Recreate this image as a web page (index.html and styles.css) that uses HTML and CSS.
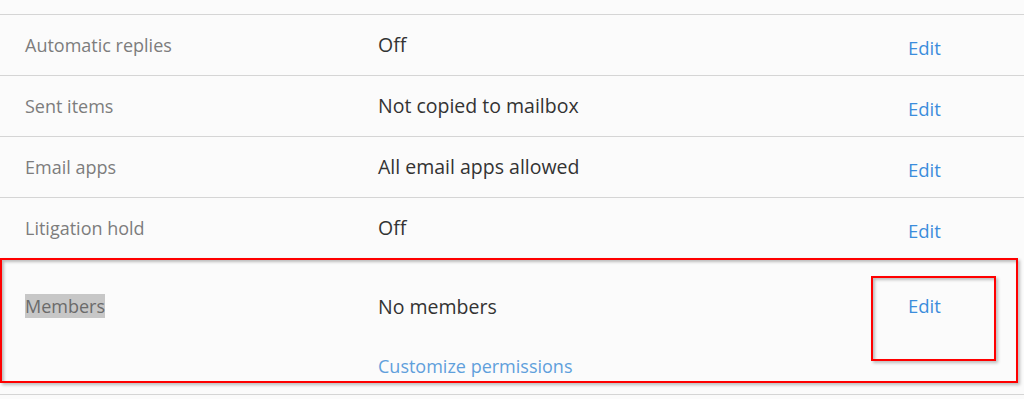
FILE: index.html
```
<!DOCTYPE html>
<html>

<head>
    <meta name="viewport" content="width=device-width, initial-scale=1.0">
    <link rel="stylesheet" href="styles.css">
</head>

<body>
    <div class="list">
        <div class="row">
            <span class="label">Automatic replies</span>
            <span class="value">Off</span>
            <span class="edit"><a href="#">Edit</a></span>
        </div>
        <div class="row">
            <span class="label">Sent items</span>
            <span class="value">Not copied to mailbox</span>
            <span class="edit"><a href="#">Edit</a></span>
        </div>
        <div class="row">
            <span class="label">Email apps</span>
            <span class="value">All email apps allowed</span>
            <span class="edit"><a href="#">Edit</a></span>
        </div>
        <div class="row">
            <span class="label">Litigation hold</span>
            <span class="value">Off</span>
            <span class="edit"><a href="#">Edit</a></span>
        </div>
        <div class="row members">
            <span class="label"><span class="selected">Members</span></span>
            <span class="value">
                <span>No members</span>
                <a class="custom" href="#">Customize permissions</a>
            </span>
            <span class="edit">
                <span class="markbox"><a href="#">Edit</a></span>
            </span>
        </div>
        <div class="bottomline"></div>
    </div>
</body>

</html>
```

FILE: styles.css
```
* {
    box-sizing: border-box;
}

body {
    margin: 0;
    background-color: #fbfbfb;
    font-family: "Open Sans", "Noto Sans", sans-serif;
    font-size: 18px;
}

a {
    text-decoration: none;
    color: #3b8ddc;
}

.list {
    padding-top: 14px;
}

.row {
    display: grid;
    grid-template-columns: 378px 530px 1fr;
    height: 61px;
    border-top: 1px solid #d5d5d5;
    align-items: center;
}

.label {
    padding-left: 25px;
    color: #7d7d7d;
}

.value {
    color: #333;
    font-size: 19.5px;
    padding-bottom: 1px;
}

.edit {
    font-size: 18.5px;
    padding-top: 5px;
}

.members {
    height: 125px;
    width: 1018px;
    border: 2px solid #ff0000;
    box-shadow: 2px 2px 3px rgba(0, 0, 0, 0.25), inset 2px 2px 3px rgba(0, 0, 0, 0.25);
    grid-template-columns: 376px 493px 1fr;
    align-items: start;
}

.members .label {
    padding-left: 23px;
    padding-top: 34px;
}

.selected {
    background-color: #c7c7c7;
    color: #6b6b6b;
}

.members .value {
    display: flex;
    flex-direction: column;
    padding-top: 33px;
}

.custom {
    margin-top: 34px;
    font-size: 18px;
    color: #5fa0dc;
}

.members .edit {
    padding-top: 16px;
}

.markbox {
    display: block;
    width: 125px;
    height: 85px;
    border: 2px solid #ff0000;
    box-shadow: 2px 2px 3px rgba(0, 0, 0, 0.25), inset 2px 2px 3px rgba(0, 0, 0, 0.25);
    padding-left: 35px;
    padding-top: 15px;
}

.bottomline {
    margin-top: 11px;
    border-top: 1px solid #d5d5d5;
}
```
